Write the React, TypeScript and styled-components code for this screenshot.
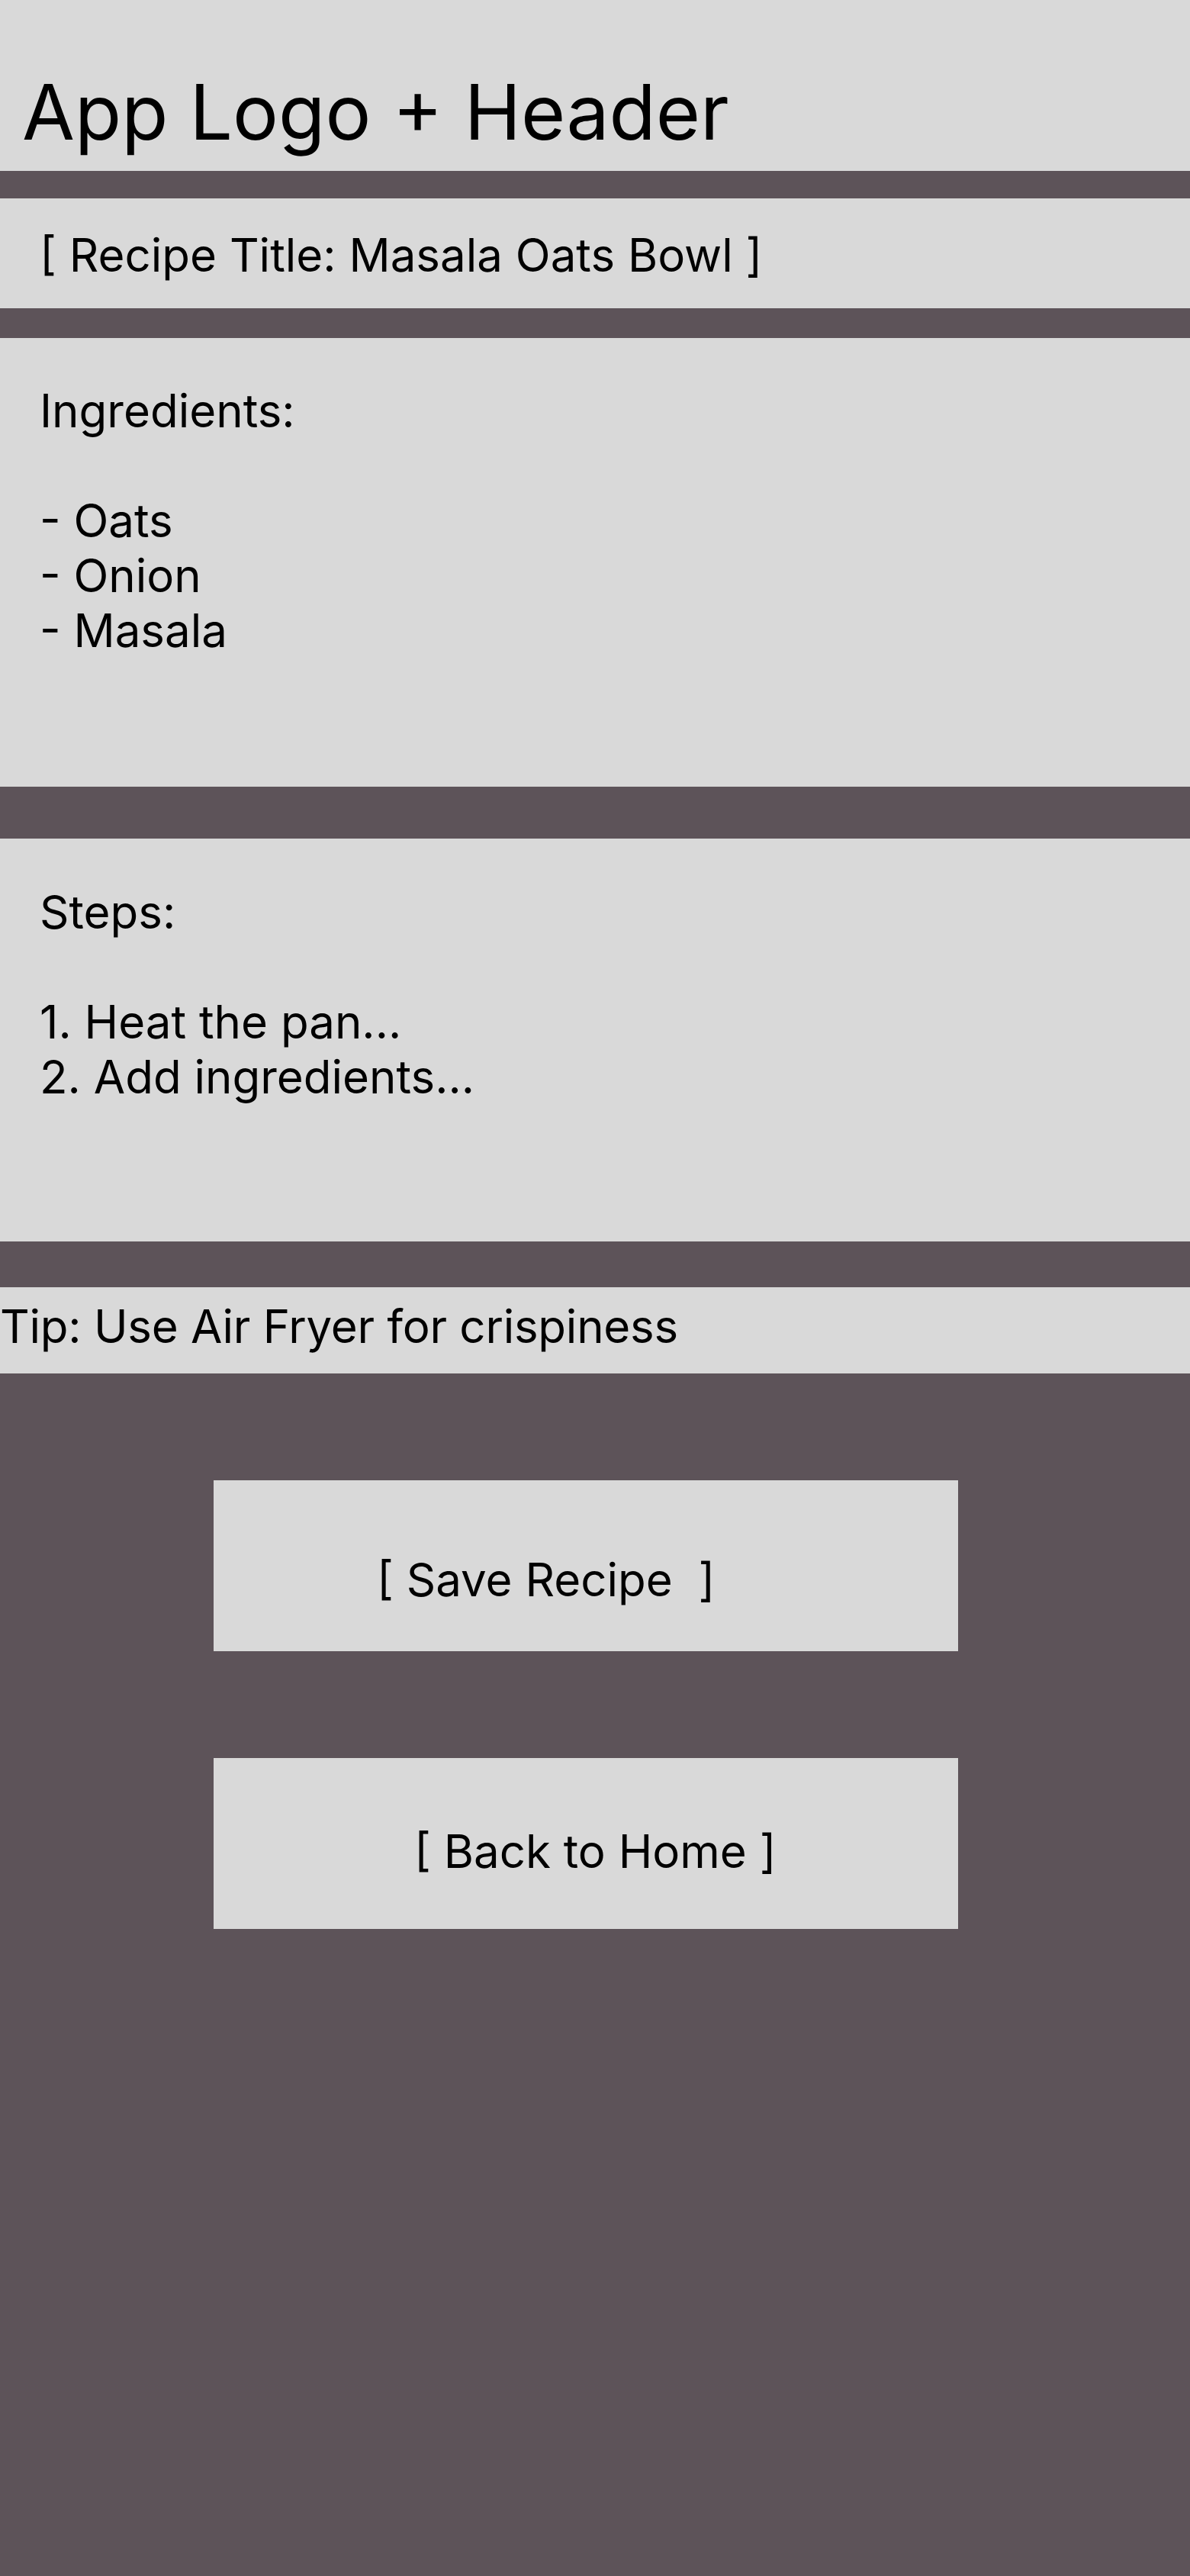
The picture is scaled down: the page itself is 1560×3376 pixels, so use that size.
import React from "react";
import styled, { createGlobalStyle } from "styled-components";

const Global = createGlobalStyle`
  html, body {
    margin: 0;
    padding: 0;
    background: #5d5359;
  }
  body {
    font-family: Inter, "Noto Sans", sans-serif;
    color: #000;
  }
`;

const Page = styled.div`
  display: flex;
  flex-direction: column;
  width: 1560px;
  min-height: 3376px;
  background: #5d5359;
`;

const Header = styled.header`
  box-sizing: border-box;
  height: 224px;
  padding: 87px 0 0 29px;
  background: #d9d9d9;
  font-size: 100px;
  line-height: 120px;
  font-weight: 400;
`;

const Panel = styled.section<{ $height: number; $top: number; $left: number; $gap: number; $tight?: boolean }>`
  box-sizing: border-box;
  height: ${(p) => p.$height}px;
  margin-top: ${(p) => p.$gap}px;
  padding: ${(p) => p.$top}px 0 0 ${(p) => p.$left}px;
  background: #d9d9d9;
  font-size: 60px;
  line-height: 72px;
  letter-spacing: ${(p) => (p.$tight ? "-0.25px" : "normal")};
  white-space: pre-line;
`;

const Actions = styled.div`
  display: flex;
  flex-direction: column;
  gap: 140px;
  padding: 140px 0 0 280px;
`;

const ActionButton = styled.button<{ $top: number; $left: number }>`
  box-sizing: border-box;
  width: 976px;
  height: 224px;
  border: none;
  margin: 0;
  padding: ${(p) => p.$top}px 0 0 ${(p) => p.$left}px;
  background: #d9d9d9;
  font-family: Inter, "Noto Sans", sans-serif;
  font-size: 60px;
  line-height: 72px;
  color: #000;
  text-align: left;
  white-space: pre;
  display: flex;
  align-items: flex-start;
  cursor: pointer;
`;

export default function App() {
  return (
    <>
      <Global />
      <Page>
        <Header>App Logo + Header</Header>
        <Panel $height={144} $gap={36} $top={38} $left={52}>
          [ Recipe Title: Masala Oats Bowl ]
        </Panel>
        <Panel $height={588} $gap={39} $top={59} $left={52}>
          {"Ingredients:\n\n- Oats\n- Onion\n- Masala"}
        </Panel>
        <Panel $height={528} $gap={68} $top={60} $left={52}>
          {"Steps:\n\n1. Heat the pan...\n2. Add ingredients..."}
        </Panel>
        <Panel $height={113} $gap={60} $top={15} $left={0} $tight>
          Tip: Use Air Fryer for crispiness
        </Panel>
        <Actions>
          <ActionButton $top={94} $left={214}>{"[ Save Recipe  ]"}</ActionButton>
          <ActionButton $top={86} $left={263}>{"[ Back to Home ]"}</ActionButton>
        </Actions>
      </Page>
    </>
  );
}
